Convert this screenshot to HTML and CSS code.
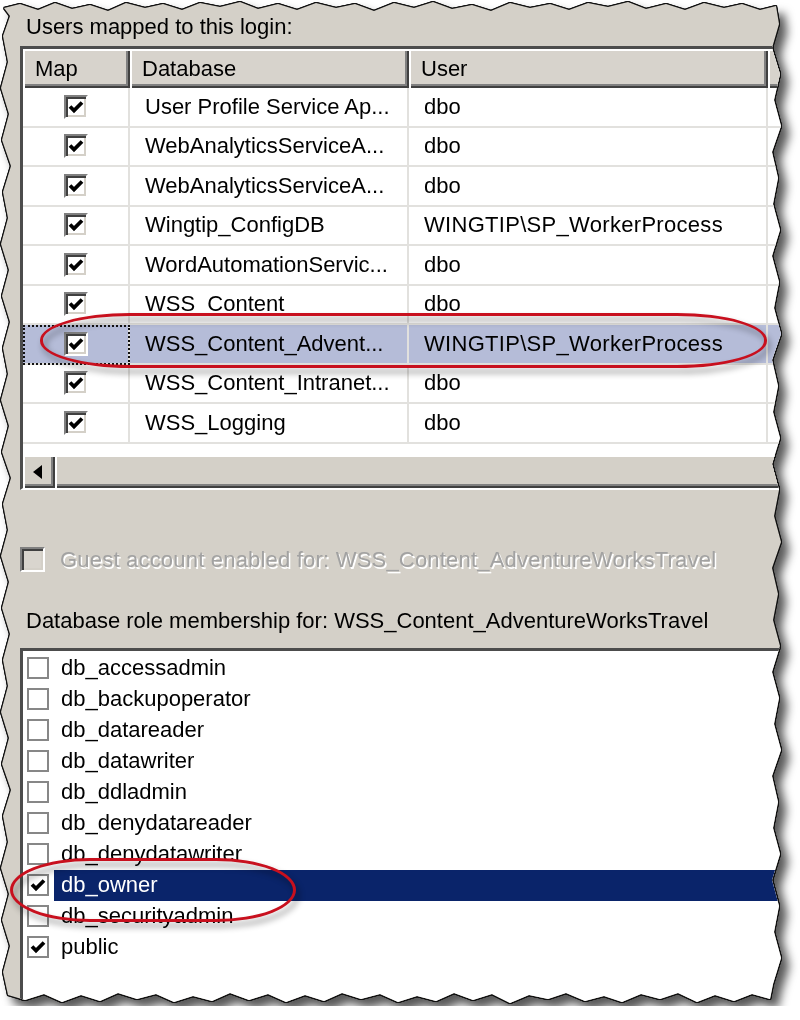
FILE: index.html
```html
<!DOCTYPE html>
<html>
<head>
<meta charset="utf-8">
<title>User Mapping</title>
<link rel="stylesheet" href="styles.css">
</head>
<body>
<div class="sheet">
  <div class="paper">
    <div class="caption">Users mapped to this login:</div>

    <div class="listview">
      <div class="lv-grid lv-head">
        <div class="hcell">Map</div>
        <div class="hcell">Database</div>
        <div class="hcell">User</div>
        <div class="hcell"></div>
      </div>

      <div class="lv-grid row">
        <div class="cell c-map"><span class="cb3d"><svg class="chk" viewBox="0 0 16 16"><polyline points="2,7.5 6,11.5 14,3.5"/></svg></span></div>
        <div class="cell c-text">User Profile Service Ap...</div>
        <div class="cell c-text">dbo</div>
        <div class="cell"></div>
      </div>
      <div class="lv-grid row">
        <div class="cell c-map"><span class="cb3d"><svg class="chk" viewBox="0 0 16 16"><polyline points="2,7.5 6,11.5 14,3.5"/></svg></span></div>
        <div class="cell c-text">WebAnalyticsServiceA...</div>
        <div class="cell c-text">dbo</div>
        <div class="cell"></div>
      </div>
      <div class="lv-grid row">
        <div class="cell c-map"><span class="cb3d"><svg class="chk" viewBox="0 0 16 16"><polyline points="2,7.5 6,11.5 14,3.5"/></svg></span></div>
        <div class="cell c-text">WebAnalyticsServiceA...</div>
        <div class="cell c-text">dbo</div>
        <div class="cell"></div>
      </div>
      <div class="lv-grid row">
        <div class="cell c-map"><span class="cb3d"><svg class="chk" viewBox="0 0 16 16"><polyline points="2,7.5 6,11.5 14,3.5"/></svg></span></div>
        <div class="cell c-text">Wingtip_ConfigDB</div>
        <div class="cell c-text wide">WINGTIP\SP_WorkerProcess</div>
        <div class="cell"></div>
      </div>
      <div class="lv-grid row">
        <div class="cell c-map"><span class="cb3d"><svg class="chk" viewBox="0 0 16 16"><polyline points="2,7.5 6,11.5 14,3.5"/></svg></span></div>
        <div class="cell c-text">WordAutomationServic...</div>
        <div class="cell c-text">dbo</div>
        <div class="cell"></div>
      </div>
      <div class="lv-grid row">
        <div class="cell c-map"><span class="cb3d"><svg class="chk" viewBox="0 0 16 16"><polyline points="2,7.5 6,11.5 14,3.5"/></svg></span></div>
        <div class="cell c-text">WSS_Content</div>
        <div class="cell c-text">dbo</div>
        <div class="cell"></div>
      </div>
      <div class="lv-grid row sel">
        <div class="cell c-map focus"><span class="cb3d"><svg class="chk" viewBox="0 0 16 16"><polyline points="2,7.5 6,11.5 14,3.5"/></svg></span></div>
        <div class="cell c-text">WSS_Content_Advent...</div>
        <div class="cell c-text wide">WINGTIP\SP_WorkerProcess</div>
        <div class="cell"></div>
      </div>
      <div class="lv-grid row">
        <div class="cell c-map"><span class="cb3d"><svg class="chk" viewBox="0 0 16 16"><polyline points="2,7.5 6,11.5 14,3.5"/></svg></span></div>
        <div class="cell c-text">WSS_Content_Intranet...</div>
        <div class="cell c-text">dbo</div>
        <div class="cell"></div>
      </div>
      <div class="lv-grid row">
        <div class="cell c-map"><span class="cb3d"><svg class="chk" viewBox="0 0 16 16"><polyline points="2,7.5 6,11.5 14,3.5"/></svg></span></div>
        <div class="cell c-text">WSS_Logging</div>
        <div class="cell c-text">dbo</div>
        <div class="cell"></div>
      </div>

      <div class="lv-blank"></div>
      <div class="hscroll">
        <div class="sb-btn"><span class="arrow-left"></span></div>
        <div class="sb-thumb"></div>
      </div>
    </div>

    <div class="guest">
      <span class="cb-dis"></span>
      <span class="guest-text">Guest account enabled for: WSS_Content_AdventureWorksTravel</span>
    </div>

    <div class="caption role-caption">Database role membership for: WSS_Content_AdventureWorksTravel</div>

    <div class="checklist">
      <div class="item"><span class="cbf"></span><span class="item-label">db_accessadmin</span></div>
      <div class="item"><span class="cbf"></span><span class="item-label">db_backupoperator</span></div>
      <div class="item"><span class="cbf"></span><span class="item-label">db_datareader</span></div>
      <div class="item"><span class="cbf"></span><span class="item-label">db_datawriter</span></div>
      <div class="item"><span class="cbf"></span><span class="item-label">db_ddladmin</span></div>
      <div class="item"><span class="cbf"></span><span class="item-label">db_denydatareader</span></div>
      <div class="item"><span class="cbf"></span><span class="item-label">db_denydatawriter</span></div>
      <div class="item sel"><span class="cbf"><svg class="chk" viewBox="0 0 16 16"><polyline points="2,7.5 6,11.5 14,3.5"/></svg></span><span class="item-label">db_owner</span></div>
      <div class="item"><span class="cbf"></span><span class="item-label">db_securityadmin</span></div>
      <div class="item"><span class="cbf"><svg class="chk" viewBox="0 0 16 16"><polyline points="2,7.5 6,11.5 14,3.5"/></svg></span><span class="item-label">public</span></div>
    </div>

    <div class="ring ring-row"></div>
    <div class="ring ring-owner"></div>
  </div>
</div>
</body>
</html>
```

FILE: styles.css
```css
html, body {
  margin: 0;
  padding: 0;
  background: #ffffff;
  overflow: hidden;
}

body {
  font-family: "Liberation Sans", Arial, sans-serif;
  font-size: 22px;
  color: #000;
}

.sheet {
  width: 784px;
  height: 1006px;
  filter:
    drop-shadow(1px 0 0 #111)
    drop-shadow(-1px 0 0 #111)
    drop-shadow(0 1px 0 #111)
    drop-shadow(0 -1px 0 #111)
    drop-shadow(7px 8px 5px rgba(0, 0, 0, 0.65));
}

.paper {
  position: relative;
  height: 100%;
  box-sizing: border-box;
  padding: 14px 0 0 20px;
  background: #d4d0c8;
  overflow: hidden;
  clip-path: polygon(
    4px 8px, 20px 4px, 38px 10px, 55px 3px, 72px 9px, 90px 5px, 108px 11px, 126px 3px, 145px 8px, 163px 4px,
    182px 10px, 200px 3px, 220px 7px, 240px 2px, 258px 9px, 278px 4px, 297px 10px, 316px 3px, 336px 8px, 355px 4px,
    374px 11px, 394px 3px, 414px 8px, 433px 2px, 452px 9px, 472px 5px, 491px 11px, 510px 3px, 530px 8px, 550px 4px,
    569px 10px, 588px 3px, 608px 7px, 628px 2px, 646px 9px, 666px 4px, 685px 10px, 704px 3px, 724px 8px, 742px 4px,
    760px 10px, 776px 6px,
    779px 24px, 772px 48px, 780px 74px, 774px 100px, 781px 126px, 772px 152px, 778px 178px, 773px 204px, 780px 230px,
    772px 256px, 779px 282px, 774px 308px, 781px 334px, 772px 360px, 778px 386px, 773px 412px, 780px 438px, 772px 464px,
    779px 490px, 774px 516px, 781px 542px, 772px 568px, 778px 594px, 773px 620px, 780px 646px, 772px 672px, 779px 698px,
    774px 724px, 781px 750px, 772px 776px, 778px 802px, 773px 828px, 780px 854px, 772px 880px, 779px 906px, 774px 932px,
    781px 958px, 773px 984px,
    770px 999px, 752px 994px, 734px 1001px, 715px 995px, 697px 1002px, 678px 993px, 660px 999px, 641px 994px,
    622px 1002px, 604px 996px, 585px 1001px, 566px 993px, 548px 999px, 529px 995px, 510px 1003px, 492px 994px,
    473px 1000px, 454px 993px, 436px 1001px, 417px 996px, 398px 1002px, 380px 994px, 361px 999px, 342px 993px,
    324px 1001px, 305px 995px, 286px 1002px, 268px 994px, 249px 1000px, 230px 993px, 212px 1001px, 193px 996px,
    174px 1002px, 156px 994px, 137px 999px, 118px 993px, 100px 1001px, 81px 995px, 62px 1002px, 44px 994px,
    25px 1000px, 8px 995px,
    3px 972px, 10px 946px, 2px 920px, 9px 894px, 1px 868px, 8px 842px, 3px 816px, 11px 790px, 2px 764px, 9px 738px,
    1px 712px, 8px 686px, 3px 660px, 10px 634px, 2px 608px, 9px 582px, 1px 556px, 8px 530px, 3px 504px, 11px 478px,
    2px 452px, 9px 426px, 1px 400px, 8px 374px, 3px 348px, 10px 322px, 2px 296px, 9px 270px, 1px 244px, 8px 218px,
    3px 192px, 11px 166px, 2px 140px, 9px 114px, 1px 88px, 8px 62px, 3px 36px, 10px 16px
  );
}

.caption {
  line-height: 26px;
  height: 26px;
  padding-left: 6px;
  white-space: nowrap;
}

/* ---------- list view ---------- */
.listview {
  margin-top: 6px;
  width: 830px;
  background: #fff;
  border-style: solid;
  border-width: 3px 0 2px 3px;
  border-color: #4c4c4c #fff #fff #4c4c4c;
}

.lv-grid {
  display: grid;
  grid-template-columns: 107px 279px 359px 120px;
}

.lv-head {
  height: 39px;
}

.hcell {
  background: #d7d3cc;
  box-shadow: inset 2px 2px 0 #fff, inset -2px -2px 0 #404040, inset -4px -4px 0 #808080;
  display: flex;
  align-items: center;
  padding-left: 12px;
  white-space: nowrap;
}

.row {
  height: 39.5px;
}

.cell {
  box-sizing: border-box;
  border-right: 2px solid #e2e1de;
  border-bottom: 2px solid #e2e1de;
  display: flex;
  align-items: center;
  white-space: nowrap;
  overflow: hidden;
}

.c-map {
  justify-content: center;
}

.c-text {
  padding-left: 15px;
}

.wide {
  letter-spacing: 0.3px;
}

.row.sel .cell {
  background: #b5bcd8;
}

.focus {
  outline: 2px dotted #111;
  outline-offset: -2px;
}

.cb3d {
  width: 24px;
  height: 24px;
  box-sizing: border-box;
  border: 2px solid;
  border-color: #808080 #fff #fff #808080;
  box-shadow: inset 2px 2px 0 #404040, inset -2px -2px 0 #d4d0c8;
  background: #fff;
  display: flex;
  align-items: center;
  justify-content: center;
  flex: none;
}

.chk {
  display: block;
  width: 16px;
  height: 16px;
}

.chk polyline {
  fill: none;
  stroke: #000;
  stroke-width: 3.8;
  stroke-linejoin: miter;
  stroke-linecap: butt;
}

.lv-blank {
  height: 11.5px;
}

.hscroll {
  height: 33px;
  display: flex;
  background: #d4d0c8;
}

.sb-btn,
.sb-thumb {
  background: #d4d0c8;
  box-shadow: inset 2px 2px 0 #fff, inset -2px -2px 0 #404040, inset -4px -4px 0 #808080;
}

.sb-btn {
  width: 32px;
  display: flex;
  align-items: center;
  justify-content: center;
}

.sb-thumb {
  flex: 1;
}

.arrow-left {
  width: 0;
  height: 0;
  border-right: 9px solid #000;
  border-top: 7px solid transparent;
  border-bottom: 7px solid transparent;
  margin-right: 4px;
}

/* ---------- guest ---------- */
.guest {
  margin-top: 57px;
  height: 25px;
  display: flex;
  align-items: center;
}

.cb-dis {
  width: 25px;
  height: 25px;
  box-sizing: border-box;
  border: 2px solid;
  border-color: #808080 #fff #fff #808080;
  box-shadow: inset 2px 2px 0 #404040, inset -2px -2px 0 #d4d0c8;
  background: #d9d5ce;
  flex: none;
}

.guest-text {
  margin-left: 15px;
  color: #a2a2a2;
  text-shadow: 1.5px 1.5px 0 #fff;
  letter-spacing: 0.2px;
  white-space: nowrap;
}

.role-caption {
  margin-top: 36px;
}

/* ---------- check list ---------- */
.checklist {
  margin-top: 14px;
  width: 830px;
  height: 380px;
  background: #fff;
  border-style: solid;
  border-width: 3px 0 0 3px;
  border-color: #4c4c4c;
  padding-top: 1px;
}

.item {
  height: 31.1px;
  display: flex;
  align-items: center;
}

.cbf {
  width: 22px;
  height: 22px;
  margin-left: 4px;
  box-sizing: border-box;
  border: 2px solid #878787;
  background: #fff;
  display: flex;
  align-items: center;
  justify-content: center;
  flex: none;
}

.cbf .chk {
  width: 16px;
  height: 16px;
}

.item-label {
  margin-left: 5px;
  padding-left: 7px;
  flex: 1;
  align-self: stretch;
  display: flex;
  align-items: center;
  white-space: nowrap;
}

.item.sel .item-label {
  background: #0a246a;
  color: #fff;
}

/* ---------- annotation rings ---------- */
.ring {
  position: absolute;
  box-sizing: border-box;
  border: 3px solid #c8101e;
  filter: drop-shadow(3px 5px 3px rgba(0, 0, 0, 0.45));
}

.ring-row {
  left: 40px;
  top: 313px;
  width: 727px;
  height: 55px;
  border-radius: 90px / 27px;
}

.ring-owner {
  left: 10px;
  top: 858px;
  width: 286px;
  height: 64px;
  border-radius: 80px / 32px;
}
```
